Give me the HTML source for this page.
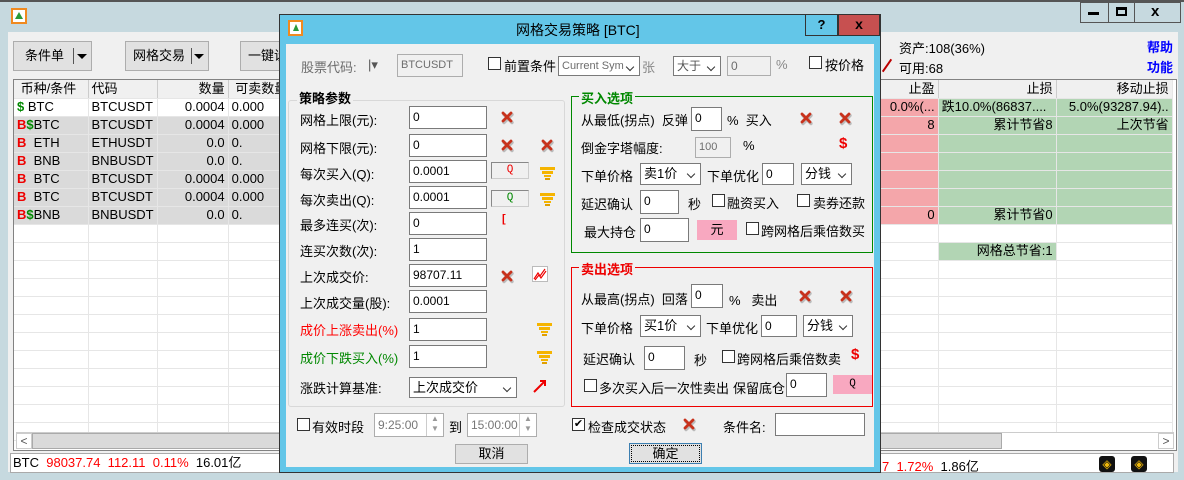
<!DOCTYPE html>
<html><head><meta charset="utf-8"><style>
*{box-sizing:border-box;margin:0;padding:0}
body{width:1184px;height:480px;overflow:hidden;background:#c6d9df;font-family:"Liberation Sans","Noto Sans CJK SC",sans-serif;font-size:12px;color:#000;position:relative}
.a{position:absolute;white-space:nowrap}
.in{position:absolute;background:#fff;border:1px solid #7a7a7a;font-size:12px;padding:1px 3px;line-height:18px}
.dis{background:#f0f0f0;border-color:#adadad;color:#6d6d6d}
.sel{position:absolute;background:#fff;border:1px solid #7a7a7a;font-size:13px;padding:1px 3px;line-height:18px}
.sel:after{content:"";position:absolute;right:6px;top:7px;width:5px;height:5px;border-right:1.5px solid #333;border-bottom:1.5px solid #333;transform:rotate(45deg)}
.cb{position:absolute;width:13px;height:13px;border:1px solid #333;background:#fff}
.l{position:absolute;font-size:13px;white-space:nowrap}
.btn{position:absolute;background:#e1e1e1;border:1px solid #adadad;text-align:center;font-size:13px}
.grid td{border-right:1px solid #e6e6e6;border-bottom:1px solid #e6e6e6;height:18px;line-height:16px;padding:0 3px;font-size:13px;white-space:nowrap;overflow:hidden}
.grid tr{height:18px}
.r{text-align:right}
.g td{background:#dadada}
.x{position:absolute;width:16px;height:16px}
.fun{position:absolute;width:16px;height:16px}
</style></head><body>
<div class="a" style="left:0;top:0;width:1184px;height:2px;background:#555"></div>
<div class="a" style="top:8px;left:11px;width:16px;height:16px;border:2px solid #f08a20;background:#fff"><div style="margin:2px auto;width:0;height:0;border-left:4px solid transparent;border-right:4px solid transparent;border-bottom:7px solid #2a9a3a"></div></div>
<div class="a" style="left:1080px;top:2px;width:101px;height:21px;border:1px solid #555;background:#c6d9df"></div>
<div class="a" style="left:1108px;top:2px;width:1px;height:21px;background:#555"></div>
<div class="a" style="left:1134px;top:2px;width:1px;height:21px;background:#555"></div>
<div class="a" style="left:1088px;top:12px;width:11px;height:3px;background:#000"></div>
<div class="a" style="left:1116px;top:7px;width:11px;height:9px;border:2px solid #000;border-top-width:3px"></div>
<div class="a" style="left:1151px;top:3px;font-size:15px;font-weight:bold">x</div>
<div class="a" style="left:8px;top:32px;width:1170px;height:440px;background:#f0f0f0"></div>
<div class="btn" style="left:13px;top:41px;width:79px;height:30px;line-height:28px;text-align:left;padding-left:11px">条件单<span style="position:absolute;left:59px;top:6px;width:1px;height:16px;background:#555"></span><span style="position:absolute;left:63px;top:12px;border-left:5px solid transparent;border-right:5px solid transparent;border-top:5px solid #000"></span></div>
<div class="btn" style="left:125px;top:41px;width:84px;height:30px;line-height:28px;text-align:left;padding-left:7px">网格交易<span style="position:absolute;left:65px;top:6px;width:1px;height:16px;background:#555"></span><span style="position:absolute;left:68px;top:12px;border-left:5px solid transparent;border-right:5px solid transparent;border-top:5px solid #000"></span></div>
<div class="btn" style="left:240px;top:41px;width:60px;height:30px;line-height:28px;text-align:left;padding-left:7px">一键设</div>
<div class="l" style="left:899px;top:38px">资产:108(36%)</div>
<div class="l" style="left:899px;top:58px">可用:68</div>
<div class="a" style="left:886px;top:58px;width:2px;height:15px;background:#b00;transform:rotate(35deg)"></div>
<div class="l" style="left:1147px;top:37px;color:#00f;font-weight:bold">帮助</div>
<div class="l" style="left:1147px;top:57px;color:#00f;font-weight:bold">功能</div>
<div class="a" style="left:13px;top:79px;width:1164px;height:372px;border:1px solid #828282;background:#fff;overflow:hidden">
<table class="grid" style="border-collapse:collapse;table-layout:fixed;position:absolute;left:0;top:0">
<colgroup><col style="width:74px"><col style="width:69px"><col style="width:71px"><col style="width:631px"><col style="width:79px"><col style="width:118px"><col style="width:116px"></colgroup>
<tr style="background:#f0f0f0"><td style="border-right:1px solid #ccc">&nbsp;币种/条件</td><td style="border-right:1px solid #ccc">代码</td><td class="r" style="border-right:1px solid #ccc">数量</td><td style="border-right:1px solid #ccc">&nbsp;可卖数量</td><td class="r" style="border-right:1px solid #ccc">止盈</td><td class="r" style="border-right:1px solid #ccc">止损</td><td class="r">移动止损</td></tr>
<tr><td><b style="color:#080">$</b>&nbsp;BTC</td><td>BTCUSDT</td><td class="r">0.0004</td><td>0.000</td><td class="r" style="background:#f4a6aa">0.0%(...</td><td style="background:#b2d5b4">跌10.0%(86837....</td><td class="r" style="background:#b2d5b4">5.0%(93287.94)..</td></tr>
<tr class="g"><td><b style="color:#e00">B</b><b style="color:#080">$</b>BTC</td><td>BTCUSDT</td><td class="r">0.0004</td><td>0.000</td><td class="r" style="background:#f4a6aa">8</td><td class="r" style="background:#b2d5b4">累计节省8</td><td class="r" style="background:#b2d5b4">上次节省</td></tr>
<tr class="g"><td><b style="color:#e00">B</b>&nbsp;&nbsp;ETH</td><td>ETHUSDT</td><td class="r">0.0</td><td>0.</td><td style="background:#f4a6aa"></td><td style="background:#b2d5b4"></td><td style="background:#b2d5b4"></td></tr>
<tr class="g"><td><b style="color:#e00">B</b>&nbsp;&nbsp;BNB</td><td>BNBUSDT</td><td class="r">0.0</td><td>0.</td><td style="background:#f4a6aa"></td><td style="background:#b2d5b4"></td><td style="background:#b2d5b4"></td></tr>
<tr class="g"><td><b style="color:#e00">B</b>&nbsp;&nbsp;BTC</td><td>BTCUSDT</td><td class="r">0.0004</td><td>0.000</td><td style="background:#f4a6aa"></td><td style="background:#b2d5b4"></td><td style="background:#b2d5b4"></td></tr>
<tr class="g"><td><b style="color:#e00">B</b>&nbsp;&nbsp;BTC</td><td>BTCUSDT</td><td class="r">0.0004</td><td>0.000</td><td style="background:#f4a6aa"></td><td style="background:#b2d5b4"></td><td style="background:#b2d5b4"></td></tr>
<tr class="g"><td><b style="color:#e00">B</b><b style="color:#080">$</b>BNB</td><td>BNBUSDT</td><td class="r">0.0</td><td>0.</td><td class="r" style="background:#f4a6aa">0</td><td class="r" style="background:#b2d5b4">累计节省0</td><td style="background:#b2d5b4"></td></tr>
<tr><td></td><td></td><td></td><td></td><td></td><td></td><td></td></tr>
<tr><td></td><td></td><td></td><td></td><td></td><td class="r" style="background:#b2d5b4">网格总节省:1</td><td></td></tr>
<tr><td></td><td></td><td></td><td></td><td></td><td></td><td></td></tr>
<tr><td></td><td></td><td></td><td></td><td></td><td></td><td></td></tr>
<tr><td></td><td></td><td></td><td></td><td></td><td></td><td></td></tr>
<tr><td></td><td></td><td></td><td></td><td></td><td></td><td></td></tr>
<tr><td></td><td></td><td></td><td></td><td></td><td></td><td></td></tr>
<tr><td></td><td></td><td></td><td></td><td></td><td></td><td></td></tr>
<tr><td></td><td></td><td></td><td></td><td></td><td></td><td></td></tr>
<tr><td></td><td></td><td></td><td></td><td></td><td></td><td></td></tr>
<tr><td></td><td></td><td></td><td></td><td></td><td></td><td></td></tr>
<tr><td></td><td></td><td></td><td></td><td></td><td></td><td></td></tr>
</table>
<div class="a" style="left:2px;top:352px;width:1158px;height:17px;background:#fff;border-top:1px solid #ccc"></div>
<div class="a" style="left:18px;top:353px;width:970px;height:16px;background:#dadada;border:1px solid #aaa"></div>
<div class="a" style="left:2px;top:353px;width:16px;height:16px;border:1px solid #ccc;text-align:center;line-height:14px;color:#555">&lt;</div>
<div class="a" style="left:1144px;top:353px;width:16px;height:16px;border:1px solid #ccc;text-align:center;line-height:14px;color:#555">&gt;</div>
</div>
<div class="a" style="left:10px;top:453px;width:1164px;height:20px;background:#fff;border:1px solid #aaa;font-size:13px;line-height:18px;padding-left:2px">BTC&nbsp;&nbsp;<span style="color:#f00">98037.74&nbsp;&nbsp;112.11&nbsp;&nbsp;0.11%</span>&nbsp;&nbsp;16.01亿</div>
<div class="l" style="left:882px;top:456px"><span style="color:#f00">7&nbsp;&nbsp;1.72%</span>&nbsp;&nbsp;1.86亿</div>
<div class="a" style="left:1099px;top:456px;width:16px;height:16px;background:#111;border-radius:3px;color:#f0b90b;text-align:center;line-height:16px;font-size:12px">◈</div>
<div class="a" style="left:1131px;top:456px;width:16px;height:16px;background:#111;border-radius:3px;color:#f0b90b;text-align:center;line-height:16px;font-size:12px">◈</div>

<div class="a" style="left:279px;top:14px;width:602px;height:459px;background:#63c6e8;border:1px solid #333"></div>
<div class="a" style="left:288px;top:20px;width:15px;height:16px;border:2px solid #f08a20;background:#fff"><div style="margin:2px auto;width:0;height:0;border-left:3px solid transparent;border-right:3px solid transparent;border-bottom:7px solid #2a9a3a"></div></div>
<div class="a" style="left:516px;top:20px;font-size:14px">网格交易策略 [BTC]</div>
<div class="a" style="left:805px;top:14px;width:33px;height:22px;border:1px solid #333;background:#63c6e8;text-align:center;font-weight:bold;font-size:13px;line-height:20px">?</div>
<div class="a" style="left:838px;top:14px;width:42px;height:22px;background:#c75050;border:1px solid #333;text-align:center;font-weight:bold;font-size:14px;line-height:18px">x</div>
<div class="a" style="left:286px;top:44px;width:588px;height:423px;background:#f0f0f0"></div>
<div class="l" style="left:301px;top:57px;color:#6d6d6d">股票代码:</div>
<div class="l" style="left:368px;top:57px;color:#555">|▾</div>
<div class="in dis" style="left:397px;top:54px;width:66px;height:23px;font-size:11px">BTCUSDT</div>
<div class="cb" style="left:488px;top:57px"></div><div class="l" style="left:504px;top:56px">前置条件</div>
<div class="sel dis" style="left:558px;top:56px;width:82px;height:20px;font-size:11px;line-height:16px">Current Sym</div>
<div class="l" style="left:642px;top:57px;color:#888">张</div>
<div class="sel dis" style="left:673px;top:56px;width:48px;height:20px;color:#555;font-size:12px;line-height:16px">大于</div>
<div class="in dis" style="left:727px;top:56px;width:44px;height:20px;line-height:16px">0</div>
<div class="l" style="left:776px;top:57px;color:#888">%</div>
<div class="cb" style="left:809px;top:56px"></div><div class="l" style="left:825px;top:55px">按价格</div>

<div class="a" style="left:288px;top:100px;width:277px;height:307px;border:1px solid #d8d8d8;border-radius:3px"></div>
<div class="l" style="left:297px;top:88px;font-weight:bold;background:#f0f0f0;padding:0 2px">策略参数</div>
<div class="l" style="left:300px;top:110px">网格上限(元):</div><div class="in" style="left:409px;top:106px;width:78px;height:23px">0</div>
<div class="l" style="left:300px;top:138px">网格下限(元):</div><div class="in" style="left:409px;top:134px;width:78px;height:23px">0</div>
<div class="l" style="left:300px;top:164px">每次买入(Q):</div><div class="in" style="left:409px;top:160px;width:78px;height:23px">0.0001</div>
<div class="l" style="left:300px;top:190px">每次卖出(Q):</div><div class="in" style="left:409px;top:186px;width:78px;height:23px">0.0001</div>
<div class="l" style="left:300px;top:215px">最多连买(次):</div><div class="in" style="left:409px;top:212px;width:78px;height:23px">0</div>
<div class="l" style="left:300px;top:241px">连买次数(次):</div><div class="in" style="left:409px;top:238px;width:78px;height:23px">1</div>
<div class="l" style="left:300px;top:267px">上次成交价:</div><div class="in" style="left:409px;top:264px;width:78px;height:23px">98707.11</div>
<div class="l" style="left:300px;top:293px">上次成交量(股):</div><div class="in" style="left:409px;top:290px;width:78px;height:23px">0.0001</div>
<div class="l" style="left:300px;top:320px;color:#f00">成价上涨卖出(%)</div><div class="in" style="left:409px;top:318px;width:78px;height:23px">1</div>
<div class="l" style="left:300px;top:348px;color:#080">成价下跌买入(%)</div><div class="in" style="left:409px;top:345px;width:78px;height:23px">1</div>
<div class="l" style="left:300px;top:378px">涨跌计算基准:</div><div class="sel" style="left:409px;top:377px;width:108px;height:21px;line-height:17px">上次成交价</div>
<div class="a" style="left:491px;top:162px;width:38px;height:17px;border:1px solid #ccc;border-top-color:#888;border-left-color:#888;color:#e00;text-align:center;font-family:'Liberation Mono';font-size:11px;line-height:15px">Q</div>
<div class="a" style="left:491px;top:190px;width:38px;height:17px;border:1px solid #ccc;border-top-color:#888;border-left-color:#888;color:#080;text-align:center;font-family:'Liberation Mono';font-size:11px;line-height:15px">Q</div>
<div class="a" style="left:502px;top:213px;color:#e00;font-weight:bold;font-size:11px">[</div>
<div class="a" style="left:532px;top:266px;width:16px;height:16px;border:1px solid #bbb;background:#fff"><svg width="14" height="14"><path d="M1 12 L5 6 L7 9 L12 2 M2 13 L6 8 L8 11 L13 4" stroke="#e00" fill="none" stroke-width="1.2"/></svg></div>
<svg class="a" style="left:532px;top:378px" width="16" height="16"><path d="M2 14 L13 3 M8 3 L13 3 L13 8" stroke="#e00" stroke-width="2" fill="none"/></svg>

<div class="a" style="left:571px;top:96px;width:302px;height:157px;border:1px solid #080"></div>
<div class="l" style="left:579px;top:88px;color:#080;font-weight:bold;background:#f0f0f0;padding:0 2px">买入选项</div>
<div class="l" style="left:581px;top:110px">从最低(拐点)&nbsp;&nbsp;反弹</div><div class="in" style="left:691px;top:107px;width:31px;height:24px">0</div>
<div class="l" style="left:727px;top:110px">%&nbsp;&nbsp;买入</div>
<div class="l" style="left:581px;top:138px">倒金字塔幅度:</div><div class="in dis" style="left:695px;top:137px;width:36px;height:21px;font-size:11px;line-height:17px">100</div>
<div class="l" style="left:743px;top:138px">%</div><div class="l" style="left:839px;top:135px;color:#e00;font-weight:bold;font-size:15px">$</div>
<div class="l" style="left:581px;top:166px">下单价格</div><div class="sel" style="left:640px;top:163px;width:61px;height:22px">卖1价</div>
<div class="l" style="left:707px;top:166px">下单优化</div><div class="in" style="left:762px;top:163px;width:32px;height:22px">0</div>
<div class="sel" style="left:801px;top:163px;width:51px;height:22px">分钱</div>
<div class="l" style="left:581px;top:194px">延迟确认</div><div class="in" style="left:640px;top:190px;width:39px;height:24px">0</div>
<div class="l" style="left:688px;top:194px">秒</div>
<div class="cb" style="left:712px;top:194px"></div><div class="l" style="left:727px;top:193px">融资买入</div>
<div class="cb" style="left:797px;top:194px"></div><div class="l" style="left:813px;top:193px">卖券还款</div>
<div class="l" style="left:584px;top:222px">最大持仓</div><div class="in" style="left:640px;top:218px;width:49px;height:24px">0</div>
<div class="a" style="left:697px;top:220px;width:40px;height:20px;background:#f8a8c0;text-align:center;font-size:13px;line-height:20px">元</div>
<div class="cb" style="left:746px;top:222px"></div><div class="l" style="left:761px;top:221px">跨网格后乘倍数买</div>

<div class="a" style="left:571px;top:267px;width:302px;height:140px;border:1px solid #e00"></div>
<div class="l" style="left:579px;top:259px;color:#e00;font-weight:bold;background:#f0f0f0;padding:0 2px">卖出选项</div>
<div class="l" style="left:581px;top:289px">从最高(拐点)&nbsp;&nbsp;回落</div><div class="in" style="left:691px;top:284px;width:32px;height:24px">0</div>
<div class="l" style="left:729px;top:290px">%&nbsp;&nbsp;&nbsp;卖出</div>
<div class="l" style="left:581px;top:318px">下单价格</div><div class="sel" style="left:640px;top:315px;width:61px;height:22px">买1价</div>
<div class="l" style="left:706px;top:318px">下单优化</div><div class="in" style="left:761px;top:315px;width:36px;height:22px">0</div>
<div class="sel" style="left:803px;top:315px;width:50px;height:22px">分钱</div>
<div class="l" style="left:583px;top:349px">延迟确认</div><div class="in" style="left:644px;top:346px;width:41px;height:24px">0</div>
<div class="l" style="left:694px;top:350px">秒</div>
<div class="cb" style="left:722px;top:350px"></div><div class="l" style="left:737px;top:349px">跨网格后乘倍数卖</div>
<div class="l" style="left:851px;top:346px;color:#e00;font-weight:bold;font-size:15px">$</div>
<div class="cb" style="left:584px;top:379px"></div><div class="l" style="left:599px;top:378px">多次买入后一次性卖出</div>
<div class="l" style="left:733px;top:378px">保留底仓</div><div class="in" style="left:786px;top:373px;width:41px;height:24px">0</div>
<div class="a" style="left:833px;top:375px;width:39px;height:19px;background:#f8a8c0;text-align:center;font-family:'Liberation Mono';font-size:11px;line-height:19px">Q</div>

<div class="cb" style="left:297px;top:418px"></div><div class="l" style="left:312px;top:417px">有效时段</div>
<div class="in dis" style="left:374px;top:413px;width:70px;height:24px;background:#fff;color:#777;line-height:20px">9:25:00</div>
<div class="a" style="left:426px;top:414px;width:17px;height:22px;border-left:1px solid #ccc;color:#999;font-size:8px;text-align:center;line-height:10px">▲<br>▼</div>
<div class="l" style="left:449px;top:417px">到</div>
<div class="in dis" style="left:467px;top:413px;width:70px;height:24px;background:#fff;color:#777;line-height:20px">15:00:00</div>
<div class="a" style="left:519px;top:414px;width:17px;height:22px;border-left:1px solid #ccc;color:#999;font-size:8px;text-align:center;line-height:10px">▲<br>▼</div>
<div class="cb" style="left:572px;top:418px;font-size:11px;line-height:11px;text-align:center">✔</div><div class="l" style="left:588px;top:417px">检查成交状态</div>
<div class="l" style="left:723px;top:417px">条件名:</div><div class="in" style="left:775px;top:413px;width:90px;height:23px"></div>
<div class="btn" style="left:455px;top:444px;width:73px;height:20px;line-height:18px">取消</div>
<div class="btn" style="left:629px;top:443px;width:73px;height:21px;line-height:19px;border:1px solid #3c7fb1;outline:1px dotted #000;outline-offset:-3px">确定</div>

<svg width="0" height="0" style="position:absolute"><defs><g id="rx"><path d="M4 4 L12 12 M12 4 L4 12" stroke="#444" stroke-width="3.4" stroke-linecap="round" opacity=".3" transform="translate(1,1.5)"/><path d="M4 4 L12 12 M12 4 L4 12" stroke="#c8321c" stroke-width="2.8" stroke-linecap="round"/></g>
<g id="fn"><rect x="1" y="3" width="15" height="3" fill="#f5b400"/><rect x="3" y="7" width="11" height="3" fill="#f5b400"/><rect x="5" y="11" width="7" height="2" fill="#f5b400"/><rect x="6" y="14" width="5" height="2" fill="#e0a000"/></g></defs></svg>
<svg class="x" style="left:499px;top:109px"><use href="#rx"/></svg>
<svg class="x" style="left:499px;top:137px"><use href="#rx"/></svg>
<svg class="x" style="left:539px;top:137px"><use href="#rx"/></svg>
<svg class="x" style="left:499px;top:268px"><use href="#rx"/></svg>
<svg class="x" style="left:798px;top:110px"><use href="#rx"/></svg>
<svg class="x" style="left:837px;top:110px"><use href="#rx"/></svg>
<svg class="x" style="left:797px;top:288px"><use href="#rx"/></svg>
<svg class="x" style="left:838px;top:288px"><use href="#rx"/></svg>
<svg class="x" style="left:681px;top:416px"><use href="#rx"/></svg>
<svg class="fun" style="left:539px;top:164px"><use href="#fn"/></svg>
<svg class="fun" style="left:539px;top:190px"><use href="#fn"/></svg>
<svg class="fun" style="left:536px;top:320px"><use href="#fn"/></svg>
<svg class="fun" style="left:536px;top:348px"><use href="#fn"/></svg>
</body></html>
